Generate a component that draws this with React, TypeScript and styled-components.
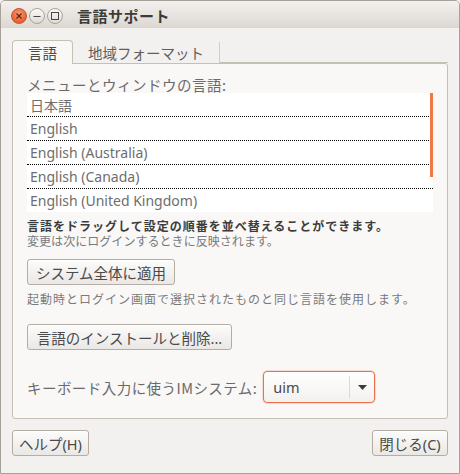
import React from "react";
import styled, { createGlobalStyle } from "styled-components";

const Global = createGlobalStyle`
  html, body { margin: 0; padding: 0; background: #f2f1f0; }
  * { box-sizing: border-box; }
  body {
    font-family: "Noto Sans", "Noto Sans CJK JP", sans-serif;
    -webkit-font-smoothing: antialiased;
  }
`;

const Window = styled.div`
  width: 460px;
  height: 474px;
  border: 1px solid #a7a199;
  border-radius: 5px 5px 0 0;
  background: #f2f1f0;
  display: flex;
  flex-direction: column;
  overflow: hidden;
`;

const TitleBar = styled.div`
  height: 27px;
  flex: none;
  display: flex;
  align-items: center;
  padding-left: 10px;
  background: linear-gradient(#f3f1ee, #dcd7d1);
`;

const Controls = styled.div`
  display: flex;
  gap: 2px;
  margin-right: 14px;
  margin-top: 2px;
`;

const Ctrl = styled.div<{ $close?: boolean }>`
  width: 16px;
  height: 16px;
  border-radius: 50%;
  display: flex;
  align-items: center;
  justify-content: center;
  border: 1px solid ${(p) => (p.$close ? "#c4532d" : "#aaa39b")};
  background: ${(p) =>
    p.$close
      ? "radial-gradient(circle at 50% 35%, #f89a72, #e9602f 70%)"
      : "linear-gradient(#fbfaf9, #dedad5)"};
`;

const Title = styled.div`
  font-family: "Noto Sans CJK JP", sans-serif;
  font-weight: bold;
  font-size: 15px;
  color: #3c3b37;
  margin-top: 2px;
  letter-spacing: 0.5px;
`;

const Body = styled.div`
  flex: 1;
  display: flex;
  flex-direction: column;
  padding: 11px 11px 0 11px;
`;

const TabRow = styled.div`
  display: flex;
  align-items: flex-end;
  height: 24px;
`;

const Tab = styled.div<{ $active?: boolean }>`
  height: ${(p) => (p.$active ? "24px" : "21px")};
  display: flex;
  align-items: center;
  font-family: "Noto Sans CJK JP", sans-serif;
  font-size: 14.5px;
  color: ${(p) => (p.$active ? "#4c4c4c" : "#5e5e5e")};
  padding: 0 15px;
  background: ${(p) => (p.$active ? "#f9f8f7" : "#f2f1f0")};
  border: ${(p) => (p.$active ? "1px solid #c6bfb6" : "none")};
  border-bottom: none;
  border-right: 1px solid ${(p) => (p.$active ? "#c6bfb6" : "#d3cdc6")};
  border-radius: ${(p) => (p.$active ? "4px 4px 0 0" : "0")};
  position: relative;
  top: ${(p) => (p.$active ? "1px" : "0")};
  z-index: ${(p) => (p.$active ? 1 : 0)};
`;

const TabFill = styled.div`
  flex: 1;
  height: 1px;
  border-bottom: 1px solid #c6bfb6;
`;

const Frame = styled.div`
  height: 356px;
  background: #f9f8f7;
  border: 1px solid #c6bfb6;
  border-radius: 0 3px 3px 3px;
  padding: 13px 14px 0 14px;
  display: flex;
  flex-direction: column;
  font-family: "Noto Sans CJK JP", sans-serif;
`;

const Label = styled.div`
  font-size: 14.5px;
  line-height: 16px;
  height: 16px;
  color: #6a6a6a;
  letter-spacing: 0.5px;
`;

const List = styled.div`
  position: relative;
  background: #ffffff;
  width: 406px;
`;

const Row = styled.div<{ $last?: boolean }>`
  height: ${(p) => (p.$last ? "23px" : "24px")};
  border-bottom: ${(p) => (p.$last ? "none" : "1px dotted #000")};
  padding-left: 3px;
  display: flex;
  align-items: center;
  font-family: "Noto Sans", "Noto Sans CJK JP", sans-serif;
  font-size: 14px;
  color: #6e6e6e;
`;

const Scroll = styled.div`
  position: absolute;
  right: 0;
  top: 0;
  width: 3px;
  height: 84px;
  background: #f07746;
`;

const Bold = styled.div`
  margin-top: 6px;
  font-size: 12px;
  line-height: 15px;
  font-weight: bold;
  color: #3c3c3c;
  letter-spacing: 1px;
`;

const Small = styled.div<{ $mt?: number; $ls: number }>`
  margin-top: ${(p) => p.$mt ?? 0}px;
  font-size: 12px;
  line-height: 15px;
  color: #7a7a7a;
  letter-spacing: ${(p) => p.$ls}px;
`;

const Button = styled.button<{ $w: number; $mt?: number }>`
  width: ${(p) => p.$w}px;
  height: 26px;
  margin-top: ${(p) => p.$mt ?? 0}px;
  padding: 0;
  border: 1px solid #b3ada6;
  border-radius: 3px;
  background: linear-gradient(#fcfcfb, #eae8e5);
  font-family: "Noto Sans", "Noto Sans CJK JP", sans-serif;
  font-size: 14.5px;
  color: #4a4a4a;
  display: flex;
  align-items: center;
  justify-content: center;
  box-shadow: inset 0 1px 0 #ffffff;
`;

const ImRow = styled.div`
  margin-top: 21px;
  display: flex;
  align-items: center;
  gap: 6px;
`;

const ImLabel = styled.div`
  font-family: "Noto Sans CJK JP", sans-serif;
  font-size: 14.5px;
  color: #6a6a6a;
  letter-spacing: 0.45px;
`;

const Combo = styled.div`
  width: 112px;
  height: 32px;
  border: 1px solid #e8724a;
  border-radius: 4px;
  background: linear-gradient(#ffffff, #f3f1ee);
  display: flex;
  align-items: center;
  box-shadow: 0 0 0 0.5px rgba(232, 114, 74, 0.4);
`;

const ComboText = styled.div`
  flex: 1;
  padding-left: 9px;
  font-family: "Noto Sans", sans-serif;
  font-size: 14.5px;
  color: #4a4a4a;
`;

const ComboSep = styled.div`
  width: 1px;
  height: 22px;
  background: #dcd8d3;
`;

const ComboArrow = styled.div`
  width: 24px;
  display: flex;
  justify-content: center;
`;

const Footer = styled.div`
  margin-top: 11px;
  display: flex;
  justify-content: space-between;
`;

const langs = [
  "日本語",
  "English",
  "English (Australia)",
  "English (Canada)",
  "English (United Kingdom)",
];

export default function App() {
  return (
    <>
      <Global />
      <Window>
        <TitleBar>
          <Controls>
            <Ctrl $close>
              <svg width="8" height="8" viewBox="0 0 8 8">
                <path d="M1.5 1.5L6.5 6.5M6.5 1.5L1.5 6.5" stroke="#5a2a18" strokeWidth="1.3" />
              </svg>
            </Ctrl>
            <Ctrl>
              <svg width="8" height="8" viewBox="0 0 8 8">
                <path d="M0.5 4.5H7.5" stroke="#4a4845" strokeWidth="1" />
              </svg>
            </Ctrl>
            <Ctrl>
              <svg width="8" height="8" viewBox="0 0 8 8">
                <rect x="0.5" y="0.5" width="7" height="7" fill="none" stroke="#4a4845" strokeWidth="1" />
              </svg>
            </Ctrl>
          </Controls>
          <Title>言語サポート</Title>
        </TitleBar>
        <Body>
          <TabRow>
            <Tab $active>言語</Tab>
            <Tab>地域フォーマット</Tab>
            <TabFill />
          </TabRow>
          <Frame>
            <Label>メニューとウィンドウの言語:</Label>
            <List>
              {langs.map((l, i) => (
                <Row key={l} $last={i === langs.length - 1}>
                  {l}
                </Row>
              ))}
              <Scroll />
            </List>
            <Bold>言語をドラッグして設定の順番を並べ替えることができます。</Bold>
            <Small $ls={0.05}>変更は次にログインするときに反映されます。</Small>
            <Button $w={148} $mt={11}>
              システム全体に適用
            </Button>
            <Small $mt={6} $ls={1}>
              起動時とログイン画面で選択されたものと同じ言語を使用します。
            </Small>
            <Button $w={205} $mt={18}>
              言語のインストールと削除...
            </Button>
            <ImRow>
              <ImLabel>キーボード入力に使うIMシステム:</ImLabel>
              <Combo>
                <ComboText>uim</ComboText>
                <ComboSep />
                <ComboArrow>
                  <svg width="9" height="5" viewBox="0 0 9 5">
                    <path d="M0 0H9L4.5 5Z" fill="#3c3c3c" />
                  </svg>
                </ComboArrow>
              </Combo>
            </ImRow>
          </Frame>
          <Footer>
            <Button $w={77}>ヘルプ(H)</Button>
            <Button $w={76}>閉じる(C)</Button>
          </Footer>
        </Body>
      </Window>
    </>
  );
}
